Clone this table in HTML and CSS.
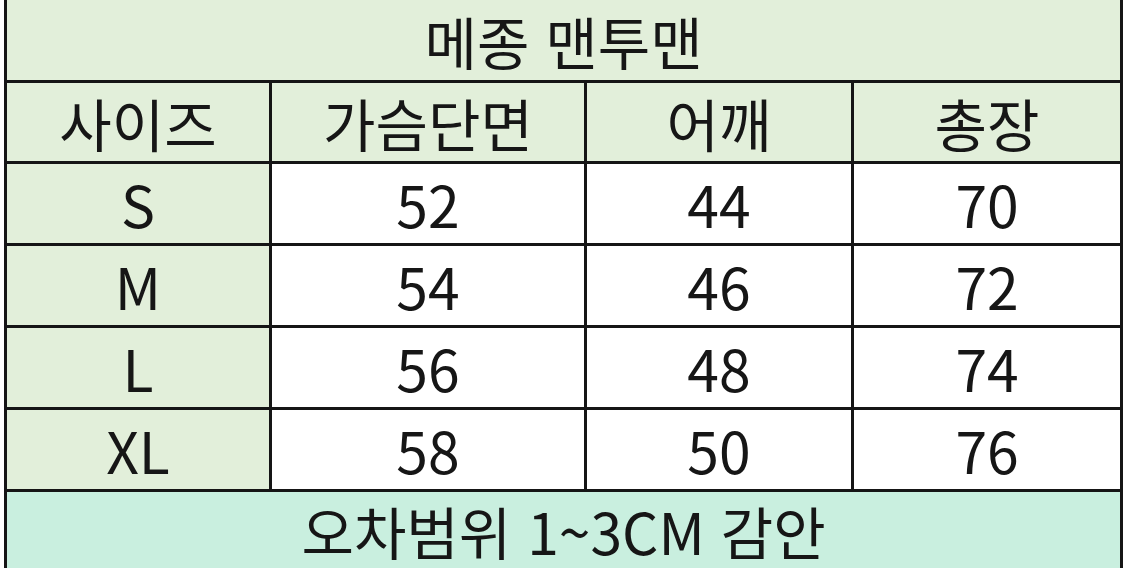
FILE: index.html
```html
<!DOCTYPE html>
<html lang="ko">
<head>
<meta charset="utf-8">
<link rel="stylesheet" href="styles.css">
</head>
<body>
<table class="size-table">
  <colgroup>
    <col class="c1"><col class="c2"><col class="c3"><col class="c4">
  </colgroup>
  <tr class="title-row"><td colspan="4">메종 맨투맨</td></tr>
  <tr class="head-row"><td>사이즈</td><td>가슴단면</td><td>어깨</td><td>총장</td></tr>
  <tr class="data-row"><td class="size">S</td><td>52</td><td>44</td><td>70</td></tr>
  <tr class="data-row"><td class="size">M</td><td>54</td><td>46</td><td>72</td></tr>
  <tr class="data-row"><td class="size">L</td><td>56</td><td>48</td><td>74</td></tr>
  <tr class="data-row"><td class="size">XL</td><td>58</td><td>50</td><td>76</td></tr>
  <tr class="foot-row"><td colspan="4">오차범위 1~3CM 감안</td></tr>
</table>
</body>
</html>
```
FILE: styles.css
```css
html, body {
  margin: 0;
  padding: 0;
  background: #ffffff;
  overflow: hidden;
}
body {
  padding-left: 4px;
}
.size-table {
  border-collapse: collapse;
  table-layout: fixed;
  width: 1116px;
  font-family: "Noto Sans CJK KR", "Noto Sans", sans-serif;
  font-size: 57px;
  color: #161616;
  text-align: center;
}
.c1 { width: 265px; }
.c2 { width: 315px; }
.c3 { width: 267px; }
.c4 { width: 269px; }
.size-table td {
  border: 3px solid #151515;
  padding: 0;
  line-height: 1;
  vertical-align: middle;
}
.title-row td {
  height: 80px;
  background: #e2efda;
  border-top: none;
}
.head-row td {
  height: 78px;
  background: #e2efda;
}
.data-row td {
  height: 79px;
  background: #ffffff;
}
.data-row td.size {
  background: #e2efda;
}
.foot-row td {
  height: 76px;
  background: #c9efdf;
  border-bottom: none;
}
```
